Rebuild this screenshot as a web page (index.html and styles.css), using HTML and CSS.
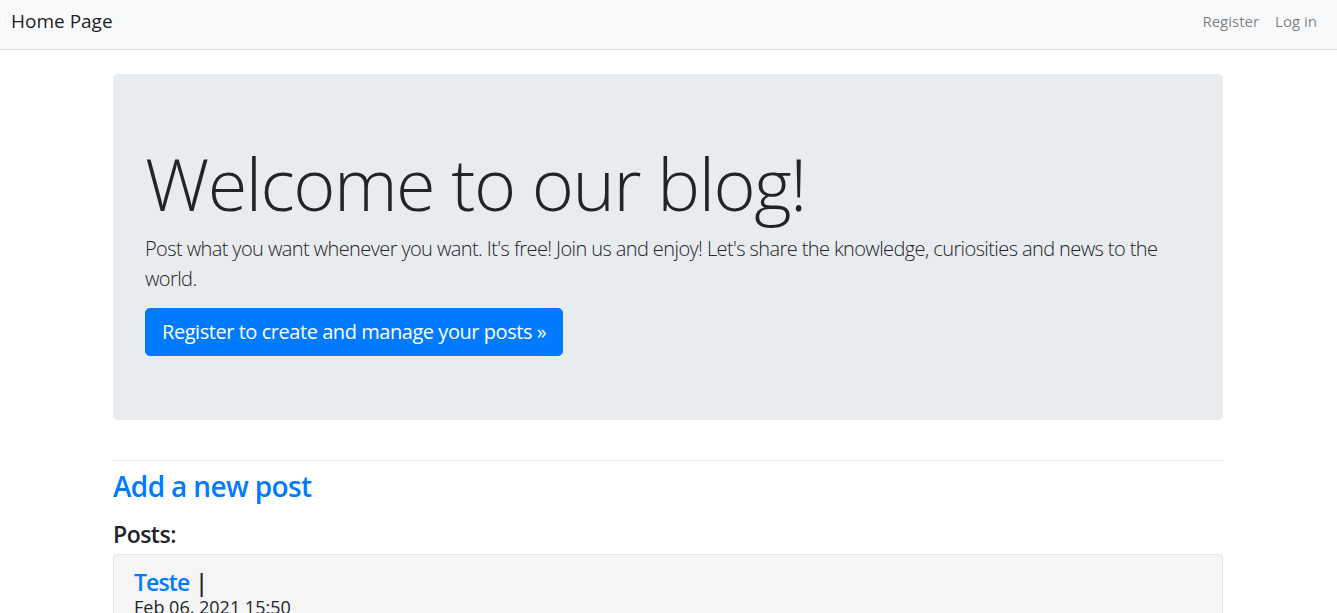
FILE: index.html
```html
<!DOCTYPE html>
<html lang="en">
<head>
<meta charset="utf-8">
<title>Home Page</title>
<link rel="stylesheet" href="styles.css">
</head>
<body>
<header>
  <nav class="navbar">
    <a class="brand" href="#">Home Page</a>
    <ul class="nav">
      <li><a class="nav-link" href="#">Register</a></li>
      <li><a class="nav-link" href="#">Log in</a></li>
    </ul>
  </nav>
</header>
<main class="container">
  <section class="jumbotron">
    <h1 class="display">Welcome to our blog!</h1>
    <p class="lead">Post what you want whenever you want. It's free! Join us and enjoy! Let's share the knowledge, curiosities and news to the world.</p>
    <a class="btn" href="#">Register to create and manage your posts »</a>
  </section>
  <hr class="divider">
  <h3 class="add-link"><a href="#">Add a new post</a></h3>
  <h4 class="posts-title">Posts:</h4>
  <div class="well">
    <div class="post-head"><a class="post-title" href="#">Teste</a> <span class="bar">|</span></div>
    <div class="post-date">Feb 06, 2021 15:50</div>
  </div>
</main>
</body>
</html>
```
FILE: styles.css
```css
* { box-sizing: border-box; }
html, body { margin: 0; padding: 0; }
body {
  font-family: "Open Sans", "Noto Sans", sans-serif;
  font-size: 16px;
  line-height: 1.5;
  color: #212529;
  background: #fff;
}
a { text-decoration: none; color: #007bff; }

.navbar {
  display: flex;
  align-items: center;
  justify-content: space-between;
  height: 50px;
  padding: 0 12px 0 11px;
  background: #f8f9fa;
  border-bottom: 1px solid #dee2e6;
}
.brand {
  color: rgba(0,0,0,.9);
  font-size: 19px;
  line-height: 1;
  padding-bottom: 6px;
}
.nav { display: flex; list-style: none; margin: 0; padding: 0; }
.nav-link {
  display: block;
  padding: 0 8px 6px;
  color: rgba(0,0,0,.5);
  font-size: 15px;
  line-height: 1;
}

.container {
  width: 1110px;
  margin: 24px 0 0 113px;
}
.jumbotron {
  background: #e9ecef;
  border-radius: 4.8px;
  padding: 66px 32px 64px;
  height: 346px;
}
.display {
  font-size: 72px;
  font-weight: 300;
  line-height: 1.2;
  margin: 0 0 8px;
  letter-spacing: -1.5px;
}
.lead {
  font-size: 20px;
  font-weight: 300;
  line-height: 1.5;
  margin: 0 0 14px;
  letter-spacing: -0.6px;
}
.btn {
  display: inline-block;
  background: #007bff;
  border: 1px solid #007bff;
  color: #fff;
  font-size: 20px;
  line-height: 1.5;
  padding: 8px 16px;
  border-radius: 4.8px;
  letter-spacing: -0.45px;
}
.divider {
  border: 0;
  border-top: 1px solid rgba(0,0,0,.1);
  margin: 40px 0 0;
}
.add-link {
  font-size: 28px;
  font-weight: 600;
  line-height: 1.2;
  margin: 9px 0 17px;
  letter-spacing: -0.65px;
}
.posts-title {
  font-size: 23px;
  font-weight: 600;
  line-height: 1.2;
  margin: 0 0 6px;
  letter-spacing: -0.5px;
}
.well {
  background: #f5f5f5;
  border: 1px solid #e3e3e3;
  border-radius: 4px;
  padding: 14px 20px 20px;
}
.post-head { font-size: 23px; line-height: 1.2; }
.post-title { font-weight: 600; letter-spacing: -0.9px; }
.bar { color: #212529; font-weight: 600; }
.post-date { font-size: 18px; line-height: 1.2; }
```
